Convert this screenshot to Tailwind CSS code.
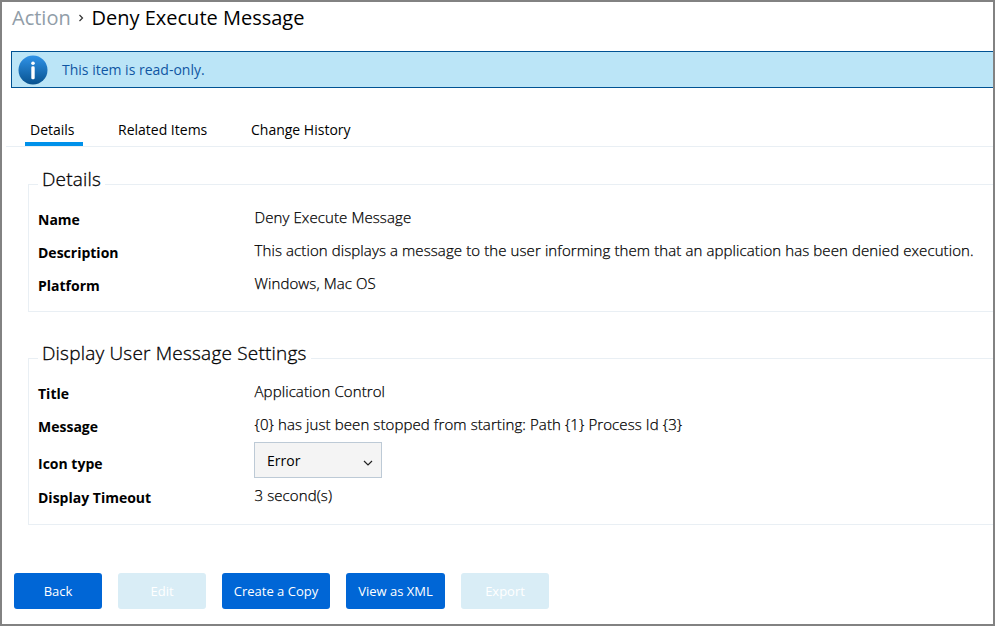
<!DOCTYPE html>
<html lang="en">
<head>
<meta charset="utf-8">
<title>Deny Execute Message</title>
<script src="https://cdn.jsdelivr.net/npm/@tailwindcss/browser@4"></script>
</head>
<body class="bg-white text-black font-['Open_Sans','Noto_Sans',sans-serif] text-sm">
<div class="flex h-[626px] w-[995px] flex-col overflow-hidden border-2 border-[#828282]">
  <nav class="flex h-8 items-center pl-2.5 text-[20px] leading-8">
    <span class="w-[58px] whitespace-nowrap text-[#919da8]">Action</span>
    <svg class="ml-2 h-2 w-1.5" viewBox="0 0 6 8" fill="none" stroke="#333" stroke-width="1.2"><path d="M1.5 1 4.5 4 1.5 7"/></svg>
    <h1 class="ml-[7.5px] whitespace-nowrap">Deny Execute Message</h1>
  </nav>

  <div class="mt-[17px] ml-[9px] flex h-[37px] items-center border border-r-0 border-[#005293] bg-[#bbe5f7] pl-1.5 text-[#0f56a3]">
    <svg class="h-[30px] w-[30px]" viewBox="0 0 30 30">
      <defs><linearGradient id="g" x1="0" y1="0" x2="0" y2="1"><stop offset="0" stop-color="#3093e8"/><stop offset="1" stop-color="#08528f"/></linearGradient></defs>
      <circle cx="15" cy="15" r="14.5" fill="url(#g)"/>
      <circle cx="15" cy="8.3" r="1.8" fill="#fff"/>
      <rect x="13.3" y="11.3" width="3.4" height="13" rx="1.4" fill="#fff"/>
    </svg>
    <span class="ml-3.5">This item is read-only.</span>
  </div>

  <div class="mt-[26px] ml-1 flex h-[33px] border-b border-[#e9eff4] pl-[19px] whitespace-nowrap">
    <div class="h-8 w-[58px] border-b-4 border-[#0091ea] pl-[5px] leading-8">Details</div>
    <div class="ml-[35px] w-[133px] leading-8">Related Items</div>
    <div class="leading-8">Change History</div>
  </div>

  <section class="mt-[37px] ml-[26px] h-[128px] border border-r-0 border-[#e9eff4] whitespace-nowrap">
    <h2 class="-mt-5 ml-[9px] h-7 w-fit bg-white px-1 text-[19px] leading-7 font-light tracking-[0.2px] [-webkit-text-stroke:0.3px]">Details</h2>
    <dl class="mt-[9px] ml-[9px] grid auto-rows-[33px] grid-cols-[216px_1fr] leading-8 [&>dd]:-mt-px [&>dd]:pl-[0.5px] [&>dd]:text-[15px] [&>dd]:leading-8 [&>dd]:font-light [&>dd]:tracking-[0.1px] [&>dd]:[-webkit-text-stroke:0.25px]">
      <dt class="pt-0.5 font-bold">Name</dt><dd>Deny Execute Message</dd>
      <dt class="pt-0.5 font-bold">Description</dt><dd>This action displays a message to the user informing them that an application has been denied execution.</dd>
      <dt class="pt-0.5 font-bold">Platform</dt><dd>Windows, Mac OS</dd>
    </dl>
  </section>

  <section class="mt-[46px] ml-[26px] h-[167px] border border-r-0 border-[#e9eff4] whitespace-nowrap">
    <h2 class="-mt-5 ml-[9px] h-7 w-fit bg-white px-1 text-[19px] leading-7 font-light tracking-[0.2px] [-webkit-text-stroke:0.3px]">Display User Message Settings</h2>
    <dl class="mt-[9px] ml-[9px] grid grid-cols-[216px_1fr] grid-rows-[33px_33px_38px_33px] leading-8 [&>dd]:-mt-px [&>dd]:pl-[0.5px] [&>dd]:text-[15px] [&>dd]:leading-8 [&>dd]:font-light [&>dd]:tracking-[0.1px] [&>dd]:[-webkit-text-stroke:0.25px]">
      <dt class="pt-0.5 font-bold">Title</dt><dd>Application Control</dd>
      <dt class="pt-0.5 font-bold">Message</dt><dd>{0} has just been stopped from starting: Path {1} Process Id {3}</dd>
      <dt class="pt-1.5 font-bold">Icon type</dt>
      <dd>
        <div class="mt-px -ml-[0.5px] flex h-9 w-32 items-center justify-between border border-[#bdcad6] bg-[#f4f4f4] pt-px pr-2 pl-3 text-sm font-normal tracking-normal [-webkit-text-stroke:0]">
          <span>Error</span>
          <svg class="mt-1 h-2.5 w-2.5" viewBox="0 0 10 10" fill="none" stroke="#222" stroke-width="1.2"><path d="M1 3 5 7 9 3"/></svg>
        </div>
      </dd>
      <dt class="pt-0.5 font-bold">Display Timeout</dt><dd>3 second(s)</dd>
    </dl>
  </section>

  <div class="mt-12 ml-3 flex gap-4 text-[13px] text-white">
    <button class="h-9 w-[88px] rounded-[3px] bg-[#0066d6]">Back</button>
    <button class="h-9 w-[88px] rounded-[3px] bg-[#d9edf6]">Edit</button>
    <button class="h-9 w-[108px] rounded-[3px] bg-[#0066d6]">Create a Copy</button>
    <button class="h-9 w-[99px] rounded-[3px] bg-[#0066d6]">View as XML</button>
    <button class="h-9 w-[88px] rounded-[3px] bg-[#d9edf6]">Export</button>
  </div>
</div>
</body>
</html>
